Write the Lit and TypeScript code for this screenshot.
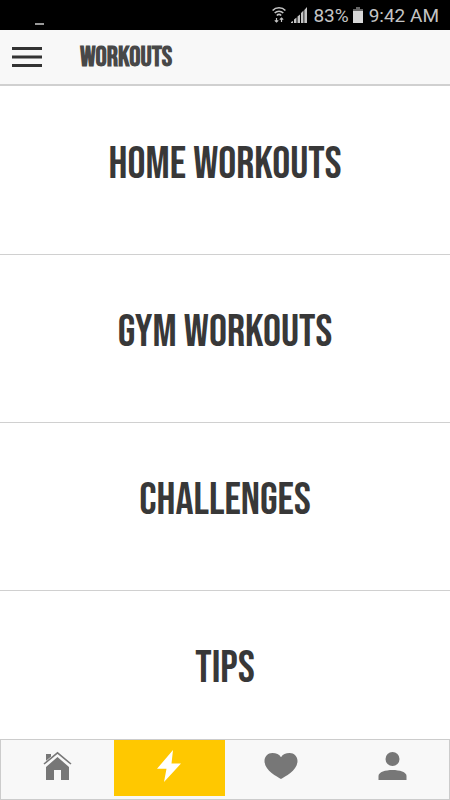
import { LitElement, html, css, svg } from "lit";
import { customElement, state } from "lit/decorators.js";
import { classMap } from "lit/directives/class-map.js";

const tabs = [
  {
    label: "Home",
    icon: svg`<path d="M2 2h5v5l-5 5z"/><path d="M13.500 5 25 15v13h-8V18h-7v10H2V15z"/><path d="M0 12.500 13.500 1.200 27 12.500" fill="none" stroke="#f8f8f8" stroke-width="3"/><path d="M0 12 13.500 .8 27 12" fill="none" stroke="#777" stroke-width="1.6"/>`,
  },
  {
    label: "Workouts",
    icon: svg`<path d="M18-2 2 16.800h9.500L9 30 26 11.500h-9.500z"/>`,
  },
  {
    label: "Favourites",
    icon: svg`<path d="M14 27C10 24.500-2.500 18.500-2.500 9-2.500 4.300 1 1 5.300 1c4 0 7 1.200 8.700 4.200C15.700 2.200 18.700 1 22.700 1 27 1 30.500 4.300 30.500 9c0 9.500-12.500 15.500-16.500 18z"/>`,
  },
  {
    label: "Profile",
    icon: svg`<circle cx="14.500" cy="7" r="7"/><path d="M.5 28v-4c0-4 7-6 14-6s14 2 14 6v4z"/>`,
  },
];

@customElement("app-root")
export class AppRoot extends LitElement {
  @state() private active = "Workouts";

  static styles = css`
    :host {
      display: flex;
      flex-direction: column;
      height: 100vh;
      background: #fff;
      font-family: "Bebas Neue", "Roboto Condensed", sans-serif;
      color: #383838;
    }
    * {
      box-sizing: border-box;
    }
    button {
      border: 0;
      margin: 0;
      padding: 0;
      background: none;
      font: inherit;
      color: inherit;
      cursor: pointer;
    }
    svg {
      display: block;
      overflow: visible;
    }
    .status {
      flex: none;
      height: 30px;
      padding: 0 11px 0 35px;
      display: flex;
      align-items: center;
      background: #000;
      color: #c4c4c4;
      font: 19px/32px Roboto, sans-serif;
    }
    .status span {
      padding-top: 2px;
    }
    .status .dash {
      width: 9px;
      height: 2px;
      margin: 18px auto 0 0;
      background: #999;
    }
    .wifi {
      margin-right: 5px;
    }
    .signal {
      margin-right: 6px;
    }
    .battery {
      margin: 0 6px 0 4px;
    }
    .bar {
      flex: none;
      height: 56px;
      padding: 0 12px;
      display: flex;
      align-items: center;
      gap: 38px;
      background: #f8f8f8;
      border-bottom: 2px solid #d0d0d0;
    }
    h1 {
      margin: 0;
      padding-top: 2px;
      font-size: 28px;
      line-height: 32px;
      font-weight: 700;
      color: #484848;
    }
    .list {
      flex: 1;
      min-height: 0;
      overflow-y: auto;
      scrollbar-width: none;
      padding-top: 1px;
    }
    .item {
      display: block;
      width: 100%;
      height: 168px;
      padding-bottom: 12px;
      border-bottom: 1px solid #d0d0d0;
      font-size: 45px;
      line-height: 48px;
    }
    .tabs {
      flex: none;
      height: 61px;
      display: grid;
      grid-template-columns: repeat(4, 1fr);
      padding: 0 1px 3px;
      background: #f8f8f8;
      border: 1px solid #ccc;
    }
    .tab {
      display: flex;
      justify-content: center;
      padding-top: 12px;
      color: #777;
    }
    .active {
      background: #ffc800;
      color: #fff;
    }
  `;

  render() {
    return html`
      <div class="status">
        <span class="dash"></span>
        <svg class="wifi" width="14" height="16" viewBox="0 0 14 16" fill="none" stroke="#c4c4c4" stroke-width="1.6">
          <path d="M.6 3.500C4-.1 10-.1 13.400 3.500M2.700 6c2.400-2.400 6.200-2.400 8.600 0M4.800 8.500c1.300-1.300 3.100-1.300 4.400 0"/>
          <path d="M4.500 11v4M9.500 15v-4M2.800 13.300l1.700 1.700 1.700-1.700M7.800 12.700 9.500 11l1.700 1.700" stroke-width="1.200"/>
        </svg>
        <svg class="signal" width="16" height="16" viewBox="0 0 16 16" fill="#c4c4c4">
          <path d="M0 15l2-1v2H0zM3 12.500l2.500-2v5.500H3zM6.500 9.500l2.500-2V16H6.500zM10 6l2.500-2.500V16H10zM13.300 3 16 0v16h-2.700z"/>
        </svg>
        <span>83%</span>
        <svg class="battery" width="10" height="16" viewBox="0 0 10 16">
          <path d="M3 0h4v2h3v3H0V2h3z" fill="#666"/>
          <path d="M0 4h10v12H0z" fill="#d8d8d8"/>
        </svg>
        <span>9:42 AM</span>
      </div>
      <header class="bar">
        <button aria-label="Menu">
          <svg width="30" height="20" viewBox="0 0 30 20" fill="#333">
            <path d="M0 0h30v3H0zM0 8.500h30v3H0zM0 17h30v3H0z"/>
          </svg>
        </button>
        <h1>WORKOUTS</h1>
      </header>
      <main class="list">
        ${["HOME WORKOUTS", "GYM WORKOUTS", "CHALLENGES", "TIPS"].map(
          (name) => html`<button class="item">${name}</button>`
        )}
      </main>
      <nav class="tabs">
        ${tabs.map(
          (tab) => html`<button
            class=${classMap({ tab: true, active: tab.label === this.active })}
            aria-label=${tab.label}
            @click=${() => (this.active = tab.label)}
          >
            <svg width="28" height="28" viewBox="0 0 28 28" fill="currentColor">${tab.icon}</svg>
          </button>`
        )}
      </nav>
    `;
  }
}
